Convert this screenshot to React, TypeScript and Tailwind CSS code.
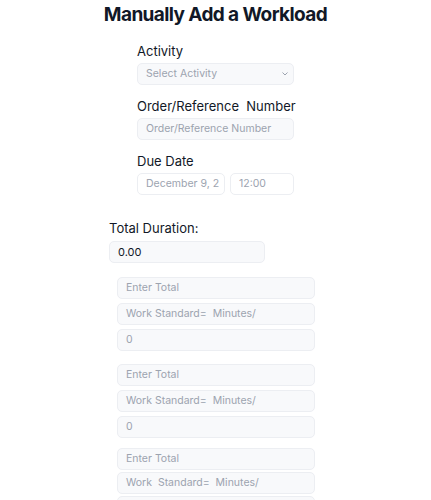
import React from "react";

const font = { fontFamily: "Inter, 'Noto Sans', sans-serif" };

const boxCls =
  "h-[22px] w-full rounded-[5px] border border-[#eceef2] bg-[#f8f9fb] px-[8px] text-[10.5px] text-[#9ca3af] flex items-center";

const Field = ({ text, dark }: { text: string; dark?: boolean }) => (
  <div className={boxCls + (dark ? " !text-[#111827] !text-[11px]" : "")}>
    <span className="whitespace-pre">{text}</span>
  </div>
);

const App = () => {
  const groups = [
    { gap: "gap-[4px]", mt: "mt-0" },
    { gap: "gap-[4px]", mt: "mt-[13px]" },
    { gap: "gap-[2px]", mt: "mt-[10px]" },
  ];
  return (
    <div className="w-[431px] h-[500px] overflow-hidden bg-white text-[#111827]" style={font}>
      {/* title */}
      <h1 className="text-center text-[19px] leading-[28px] font-bold tracking-[-0.6px] text-[#111827] pt-[1px]">
        Manually Add a Workload
      </h1>

      <div className="mx-auto w-[157px] mt-[12px]">
        <p className="text-[13px] leading-[20px]">Activity</p>
        <div className={boxCls + " mt-[2px] justify-between pr-[5px]"}>
          <span>Select Activity</span>
          <svg width="6" height="4" viewBox="0 0 6 4" className="text-[#9ca3af]">
            <path d="M0.5 0.5 L3 3 L5.5 0.5" fill="none" stroke="currentColor" strokeWidth="1" />
          </svg>
        </div>

        <p className="text-[13px] leading-[20px] mt-[11px] whitespace-pre">Order/Reference  Number</p>
        <div className="mt-[2px]">
          <Field text="Order/Reference Number" />
        </div>

        <p className="text-[13px] leading-[20px] mt-[11px]">Due Date</p>
        <div className="mt-[2px] flex gap-[5px]">
          <div className={boxCls + " !w-[88px] bg-white overflow-hidden"}>
            <span className="whitespace-nowrap">December 9, 2</span>
          </div>
          <div className={boxCls + " !w-[64px] bg-white"}>
            <span>12:00</span>
          </div>
        </div>
      </div>

      <div className="ml-[109px] w-[156px] mt-[23px]">
        <p className="text-[13px] leading-[20px]">Total Duration:</p>
        <div className="mt-[3px]">
          <Field text="0.00" dark />
        </div>
      </div>

      <div className="ml-[117px] w-[198px] mt-[14px] flex flex-col">
        {groups.map((g, i) => (
          <div key={i} className={`flex flex-col ${g.gap} ${g.mt}`}>
            <Field text="Enter Total" />
            <Field text={i === 2 ? "Work  Standard=  Minutes/" : "Work Standard=  Minutes/"} />
            <Field text="0" />
          </div>
        ))}
      </div>
    </div>
  );
};

export default App;
